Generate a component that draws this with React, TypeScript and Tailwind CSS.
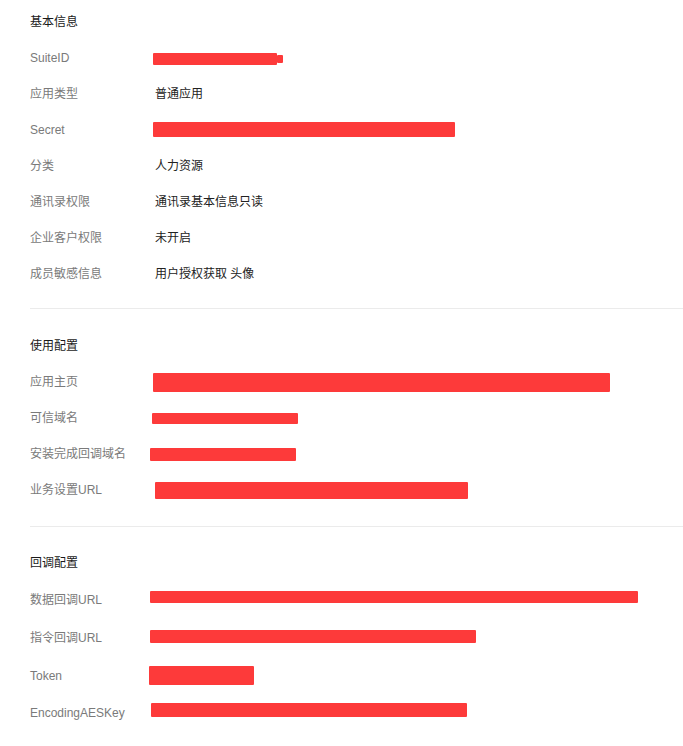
type Bar = { ml: number; mt: number; w: number; h: number };
type Row = { label: string; value?: string; bar?: Bar; tail?: Bar; h?: number };

const basic: Row[] = [
  { label: 'SuiteID', bar: { ml: -2, mt: 14, w: 124, h: 12 }, tail: { ml: 0, mt: 16, w: 6, h: 8 } },
  { label: '应用类型', value: '普通应用' },
  { label: 'Secret', bar: { ml: -2, mt: 11, w: 302, h: 15 } },
  { label: '分类', value: '人力资源' },
  { label: '通讯录权限', value: '通讯录基本信息只读' },
  { label: '企业客户权限', value: '未开启' },
  { label: '成员敏感信息', value: '用户授权获取 头像' },
];

const usage: Row[] = [
  { label: '应用主页', bar: { ml: -2, mt: 10, w: 457, h: 19 } },
  { label: '可信域名', bar: { ml: -3, mt: 14, w: 146, h: 11 } },
  { label: '安装完成回调域名', bar: { ml: -5, mt: 13, w: 146, h: 13 } },
  { label: '业务设置URL', bar: { ml: 0, mt: 11, w: 313, h: 17 } },
];

const callback: Row[] = [
  { label: '数据回调URL', h: 38, bar: { ml: -5, mt: 11, w: 488, h: 12 } },
  { label: '指令回调URL', h: 38, bar: { ml: -5, mt: 12, w: 326, h: 13 } },
  { label: 'Token', h: 38, bar: { ml: -6, mt: 10, w: 105, h: 19 } },
  { label: 'EncodingAESKey', h: 36, bar: { ml: -4, mt: 9, w: 316, h: 14 } },
];

function Redact({ bar }: { bar: Bar }) {
  return (
    <div
      className="bg-[#fd3a3a] rounded-[1px] shrink-0"
      style={{ marginLeft: bar.ml, marginTop: bar.mt, width: bar.w, height: bar.h }}
    />
  );
}

function InfoRow({ row }: { row: Row }) {
  return (
    <div className="flex" style={{ height: row.h ?? 36 }}>
      <div className="w-[125px] shrink-0 flex items-center pt-[2px] text-[#7a7a7a]">{row.label}</div>
      {row.bar ? (
        <div className="flex items-start">
          <Redact bar={row.bar} />
          {row.tail && <Redact bar={row.tail} />}
        </div>
      ) : (
        <div className="flex items-center pt-[2px] text-[#222]">{row.value}</div>
      )}
    </div>
  );
}

function Section({ title, rows }: { title: string; rows: Row[] }) {
  return (
    <div>
      <div className="h-9 flex items-center pt-[2px] text-[#1a1a1a]">{title}</div>
      {rows.map((r) => (
        <InfoRow key={r.label} row={r} />
      ))}
    </div>
  );
}

export default function App() {
  return (
    <div
      className="bg-white min-h-[746px] pl-[30px] pt-[3px] text-[12px] leading-none"
      style={{ fontFamily: '"Liberation Sans", "Noto Sans CJK SC", sans-serif' }}
    >
      <Section title="基本信息" rows={basic} />
      <div className="h-px bg-[#ebebeb] mt-[17px] mb-[18px]" />
      <Section title="使用配置" rows={usage} />
      <div className="h-px bg-[#ebebeb] mt-[19px] mb-[17px]" />
      <Section title="回调配置" rows={callback} />
    </div>
  );
}
